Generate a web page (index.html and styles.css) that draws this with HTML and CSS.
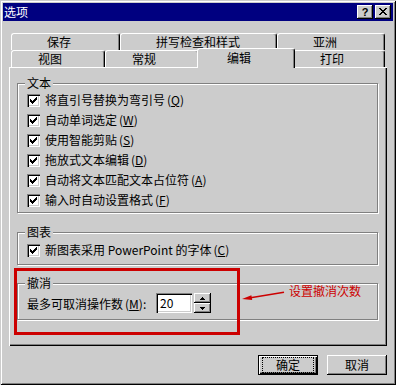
FILE: index.html
```html
<!DOCTYPE html>
<html>
<head>
<meta charset="utf-8">
<title>选项</title>
<link rel="stylesheet" href="styles.css">
</head>
<body>
<svg width="0" height="0" class="defs">
  <symbol id="ck" viewBox="0 0 13 13">
    <path d="M3 5h1v3H3z M4 6h1v3H4z M5 7h1v3H5z M6 6h1v3H6z M7 5h1v3H7z M8 4h1v3H8z M9 3h1v3H9z" fill="#000"/>
  </symbol>
</svg>
<div class="win">
  <div class="titlebar">
    <span class="title">选项</span>
    <span class="tbtn help">?</span>
    <span class="tbtn close"><svg width="8" height="7" viewBox="0 0 8 7" shape-rendering="crispEdges"><path d="M0 0h2v1h1v1h2V1h1V0h2v1H7v1H6v1H5v1h1v1h1v1h1v1H6V6H5V5H3v1H2v1H0V6h1V5h1V4h1V3H2V2H1V1H0z" fill="#000"/></svg></span>
  </div>

  <div class="tabs">
    <div class="tabrow back">
      <div class="tab w-save">保存</div>
      <div class="tab w-spell">拼写检查和样式</div>
      <div class="tab w-asia">亚洲</div>
    </div>
    <div class="tabrow front">
      <div class="tab w-view">视图</div>
      <div class="tab w-gen">常规</div>
      <div class="tab w-edit active">编辑</div>
      <div class="tab w-print">打印</div>
    </div>
  </div>

  <div class="panel">
    <div class="group g-text">
      <div class="group-title">文本</div>
      <div class="chk"><svg class="box"><use href="#ck"/></svg>将直引号替换为弯引号<span class="acc">(<u>Q</u>)</span></div>
      <div class="chk"><svg class="box"><use href="#ck"/></svg>自动单词选定<span class="acc">(<u>W</u>)</span></div>
      <div class="chk"><svg class="box"><use href="#ck"/></svg>使用智能剪贴<span class="acc">(<u>S</u>)</span></div>
      <div class="chk"><svg class="box"><use href="#ck"/></svg>拖放式文本编辑<span class="acc">(<u>D</u>)</span></div>
      <div class="chk"><svg class="box"><use href="#ck"/></svg>自动将文本匹配文本占位符<span class="acc">(<u>A</u>)</span></div>
      <div class="chk"><svg class="box"><use href="#ck"/></svg>输入时自动设置格式<span class="acc">(<u>F</u>)</span></div>
    </div>

    <div class="group g-chart">
      <div class="group-title">图表</div>
      <div class="chk"><svg class="box"><use href="#ck"/></svg>新图表采用 PowerPoint 的字体<span class="acc">(<u>C</u>)</span></div>
    </div>

    <div class="group g-undo">
      <div class="group-title">撤消</div>
      <div class="undo-row">
        <span class="undo-label">最多可取消操作数<span class="acc">(<u>M</u>)</span>:</span>
        <span class="field">20</span>
        <span class="spin">
          <span class="spin-btn"><svg width="5" height="3" viewBox="0 0 5 3" shape-rendering="crispEdges"><path d="M2 0h1v1h1v1h1v1H0V2h1V1h1z" fill="#000"/></svg></span>
          <span class="spin-btn"><svg width="5" height="3" viewBox="0 0 5 3" shape-rendering="crispEdges"><path d="M0 0h5v1H4v1H3v1H2V2H1V1H0z" fill="#000"/></svg></span>
        </span>
      </div>
    </div>
  </div>

  <div class="buttons">
    <div class="btn default"><span class="focus">确定</span></div>
    <div class="btn">取消</div>
  </div>

  <!-- annotation drawn over the dialog -->
  <div class="note-box"></div>
  <svg class="note-arrow" width="50" height="18" viewBox="0 0 50 18">
    <line x1="46" y1="6.3" x2="11" y2="12" stroke="#cc0000" stroke-width="1.4"/>
    <polygon points="4,13 13.4,9.2 14.2,14" fill="#cc0000"/>
  </svg>
  <div class="note-text">设置撤消次数</div>
</div>
</body>
</html>
```

FILE: styles.css
```css
* {box-sizing: border-box}
body {margin: 0; padding: 0; background: #cccccc; overflow: hidden; font-family: "Noto Sans CJK SC", "Noto Sans", sans-serif; font-size: 12px; color: #000}
.defs {position: absolute}
u {text-decoration: underline; text-underline-offset: 1px}

.win {position: relative; width: 396px; height: 385px; padding: 3px; background: #cccccc;
  box-shadow: inset 1px 1px 0 #cccccc, inset -1px -1px 0 #000, inset 2px 2px 0 #fff, inset -2px -2px 0 #808080}

.titlebar {height: 18px; background: #000080; color: #fff; display: flex; align-items: center; padding: 0 2px 0 1px}
.title {flex: 1; line-height: 14px}
.tbtn {width: 16px; height: 14px; background: #cccccc; display: flex; align-items: center; justify-content: center; color: #000;
  box-shadow: inset -1px -1px 0 #000, inset 1px 1px 0 #fff, inset -2px -2px 0 #808080}
.help {margin-right: 2px; font: bold 11px "Liberation Sans", sans-serif; padding-bottom: 1px}
.close svg {margin-top: -1px}

.tabs {padding: 12px 0 0 8px}
.tabrow {display: flex; align-items: flex-end; height: 17px}
.tab {height: 17px; line-height: 15px; white-space: nowrap; background: #cccccc;
  border-top: 1px solid #fff; border-left: 1px solid #fff; border-right: 1px solid #000;
  border-radius: 3px 3px 0 0; box-shadow: inset -1px 0 0 #808080}
.back .tab {padding-left: 35px}
.front .tab {padding-left: 26px}
.w-save {width: 109px}
.w-spell {width: 157px}
.w-asia {width: 108px}
.w-view {width: 94px}
.w-gen {width: 94px}
.w-edit {width: 94px}
.w-print {width: 92px}
.tab.active {position: relative; z-index: 1; width: 98px; height: 20px; margin: -2px -2px -1px -2px; padding-left: 29px; line-height: 17px}

.panel {margin-left: 6px; width: 378px; height: 279px; padding: 16px 9px 0 8px;
  box-shadow: inset 1px 1px 0 #fff, inset -1px -1px 0 #000, inset -2px -2px 0 #808080}

.group {border: 1px solid #808080; padding-left: 9px; box-shadow: inset 1px 1px 0 #fff, 1px 1px 0 #fff}
.group-title {width: fit-content; margin: -8px 0 0 -2px; padding: 0 2px; line-height: 14px; background: #cccccc}
.g-text {padding-bottom: 2px}
.g-chart {margin-top: 19px; padding-bottom: 4px}
.g-chart .group-title {margin-bottom: 1px}
.g-undo {margin-top: 18px; padding-bottom: 6px}
.g-undo .group-title {margin-bottom: 3px}

.chk {display: flex; align-items: center; height: 20px; line-height: 14px; white-space: nowrap}
.box {width: 13px; height: 13px; margin-right: 5px; flex: none; background: #fff;
  box-shadow: inset 1px 1px 0 #808080, inset 2px 2px 0 #000, inset -1px -1px 0 #fff, inset -2px -2px 0 #cccccc}
.acc {margin-left: 2px}

.undo-row {display: flex; align-items: center; height: 20px}
.undo-label {width: 129px; white-space: nowrap}
.field {width: 36px; height: 20px; padding: 3px 0 0 4px; line-height: 14px; background: #fff;
  box-shadow: inset 1px 1px 0 #808080, inset 2px 2px 0 #000, inset -1px -1px 0 #fff, inset -2px -2px 0 #cccccc}
.spin {margin-left: 2px; width: 17px; height: 20px; display: flex; flex-direction: column}
.spin-btn {flex: 1; display: flex; align-items: center; justify-content: center; background: #cccccc;
  box-shadow: inset -1px -1px 0 #000, inset 1px 1px 0 #fff, inset -2px -2px 0 #808080}

.buttons {display: flex; justify-content: flex-end; gap: 9px; margin-top: 9px; padding-right: 6px}
.btn {width: 60px; height: 20px; display: flex; align-items: center; justify-content: center; line-height: 14px;
  box-shadow: inset -1px -1px 0 #000, inset 1px 1px 0 #fff, inset -2px -2px 0 #808080}
.btn.default {box-shadow: inset 0 0 0 1px #000, inset 2px 2px 0 #fff, inset -2px -2px 0 #000, inset -3px -3px 0 #808080}
.focus {width: 52px; height: 16px; border: 1px dotted #000; display: flex; align-items: center; justify-content: center}

.note-box {position: absolute; left: 14px; top: 268px; width: 226px; height: 67px; border: 3px solid #cc0000}
.note-arrow {position: absolute; left: 238px; top: 286px}
.note-text {position: absolute; left: 289px; top: 284px; line-height: 14px; color: #cc0000}
```
